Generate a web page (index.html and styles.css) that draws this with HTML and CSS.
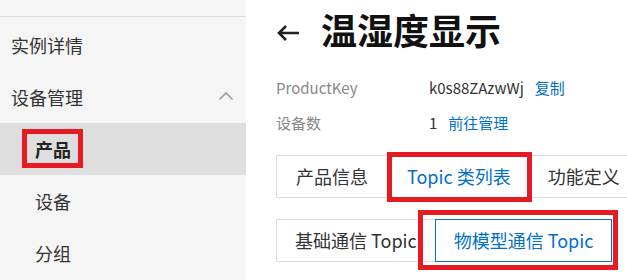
FILE: index.html
```html
<!DOCTYPE html>
<html lang="zh-CN">

<head>
    <meta charset="UTF-8">
    <meta name="viewport" content="width=device-width, initial-scale=1.0">
    <title>温湿度显示</title>
    <link rel="stylesheet" href="styles.css">
</head>

<body>
    <div class="sidebar">
        <div class="side-top"></div>
        <ul class="menu">
            <li class="menu-item">实例详情</li>
            <li class="menu-item group">
                <span>设备管理</span>
                <svg class="chevron" width="16" height="10" viewBox="0 0 16 10">
                    <path d="M1.5 8.5L8 2l6.5 6.5" fill="none" stroke="#9a9a9a" stroke-width="1.6"/>
                </svg>
            </li>
            <li class="menu-item sub active">产品</li>
            <li class="menu-item sub">设备</li>
            <li class="menu-item sub">分组</li>
        </ul>
    </div>

    <div class="main">
        <div class="header">
            <svg class="back" width="24" height="18" viewBox="0 0 24 18">
                <path d="M23 9H3M10 2L3 9l7 7" fill="none" stroke="#222" stroke-width="2.6"/>
            </svg>
            <h1 class="title">温湿度显示</h1>
        </div>

        <div class="info">
            <div class="info-row">
                <span class="info-label">ProductKey</span>
                <span class="info-value">k0s88ZAzwWj</span>
                <a class="link">复制</a>
            </div>
            <div class="info-row">
                <span class="info-label">设备数</span>
                <span class="info-value">1</span>
                <a class="link">前往管理</a>
            </div>
        </div>

        <div class="tabs">
            <div class="tab">产品信息</div>
            <div class="tab current">Topic 类列表</div>
            <div class="tab">功能定义</div>
        </div>

        <div class="subtabs">
            <div class="subtab">基础通信 Topic</div>
            <div class="subtab current">物模型通信 Topic</div>
        </div>
    </div>

    <!-- 标注框 -->
    <div class="mark mark-product"></div>
    <div class="mark mark-tab"></div>
    <div class="mark mark-subtab"></div>
</body>

</html>
```

FILE: styles.css
```css
* {
    box-sizing: border-box;
}

body {
    position: relative;
    margin: 0;
    height: 280px;
    display: flex;
    overflow: hidden;
    background-color: #FFF;
    font-family: "Noto Sans CJK SC", "Noto Sans", sans-serif;
    color: #333;
}

.sidebar {
    width: 246px;
    flex-shrink: 0;
    background-color: #f5f5f5;
}

.side-top {
    height: 17px;
    border-bottom: 1px solid #dcdcdc;
}

.menu {
    margin: 2px 0 0;
    padding: 0;
    list-style: none;
}

.menu-item {
    display: flex;
    align-items: center;
    justify-content: space-between;
    height: 52px;
    padding: 0 12px 0 11px;
    font-size: 18px;
    color: #333;
}

.chevron {
    margin-top: -2px;
}

.menu-item.sub {
    padding-left: 35px;
}

.menu-item.active {
    background-color: #dedede;
    font-weight: bold;
    color: #222;
}

.main {
    flex: 1;
    min-width: 0;
    padding: 4px 0 0 30px;
}

.header {
    display: flex;
    align-items: center;
    height: 50px;
}

.back {
    margin-top: 8px;
    margin-right: 21px;
}

.title {
    margin: 0;
    font-size: 36px;
    line-height: 50px;
    font-weight: bold;
    color: #111;
}

.info {
    margin-top: 16px;
}

.info-row {
    display: flex;
    height: 35px;
    line-height: 35px;
    font-size: 15px;
}

.info-label {
    width: 153px;
    color: #888;
}

.info-value {
    margin-right: 11px;
    color: #333;
}

.link {
    color: #0070cc;
    cursor: pointer;
}

.tabs,
.subtabs {
    display: flex;
    white-space: nowrap;
}

.tabs {
    margin-top: 15px;
}

.subtabs {
    margin-top: 21px;
}

.tab,
.subtab {
    flex-shrink: 0;
    height: 43px;
    line-height: 41px;
    border: 1px solid #dcdcdc;
    font-size: 18px;
    color: #333;
    cursor: pointer;
}

.tab {
    padding: 0 19px;
}

.tab.current {
    padding: 0 17px 0 19px;
    color: #0070cc;
}

.subtab {
    padding: 0 18px;
}

.tab + .tab,
.subtab + .subtab {
    margin-left: -1px;
}

.subtab.current {
    position: relative;
    border-color: #0070cc;
    color: #0070cc;
}

.mark {
    position: absolute;
    border: 5px solid #e61a23;
}

.mark-product {
    left: 22px;
    top: 129px;
    width: 61px;
    height: 39px;
}

.mark-tab {
    left: 387px;
    top: 152px;
    width: 145px;
    height: 50px;
}

.mark-subtab {
    left: 418px;
    top: 210px;
    width: 200px;
    height: 60px;
}
```
